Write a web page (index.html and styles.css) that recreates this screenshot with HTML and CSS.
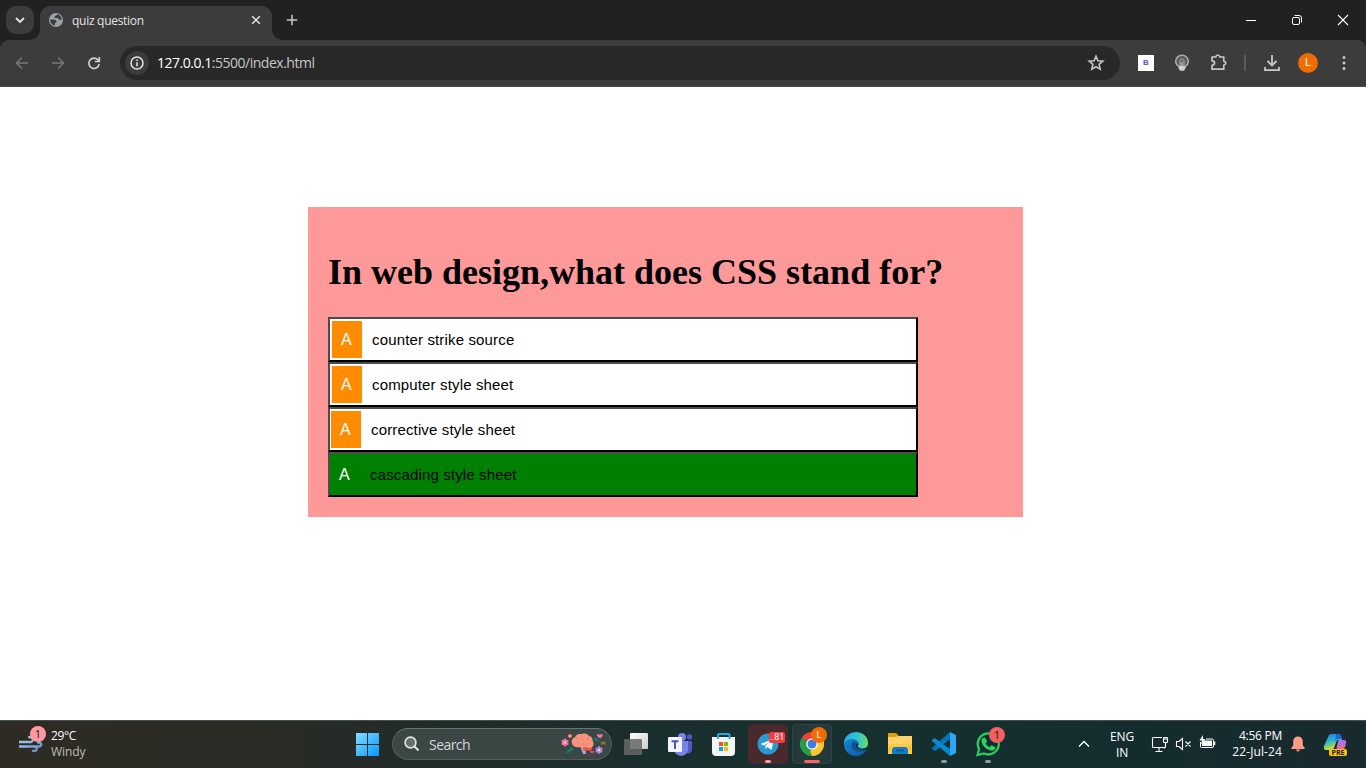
FILE: index.html
```html
<!DOCTYPE html>
<html lang="en">
<head>
<meta charset="utf-8">
<title>quiz question</title>
<link rel="stylesheet" href="styles.css">
</head>
<body>
<header class="tabstrip">
  <button class="tab-search"><svg width="12" height="12" viewBox="0 0 12 12"><path d="M2 4l4 4 4-4" fill="none" stroke="#e3e3e3" stroke-width="1.8"/></svg></button>
  <div class="tab">
    <svg width="16" height="16" viewBox="0 0 16 16"><circle cx="8" cy="8" r="7" fill="#9aa0a6"/><path d="M2.300 7.500h3.200c2 0 3 1 3 2.300 0 .8-.5 1-1.500 1.200l-.2 2.500C4 13 2 10.500 2.300 7.500zM9 2.300c0 1-.5 1.500-1.700 1.700-1.300.3-1 2 .2 2h2c1 0 1 1.600 2 1.800 1 .2 1.500-.3 2.200-.3C13.500 4.700 11.700 2.600 9 2.300z" fill="#3c3c3c"/></svg>
    <span class="tab-title">quiz question</span>
    <svg width="10" height="10" viewBox="0 0 10 10"><path d="M1.200 1.200l7.600 7.600M8.800 1.200L1.200 8.800" stroke="#e3e3e3" stroke-width="1.5"/></svg>
  </div>
  <svg class="new-tab" width="12" height="12" viewBox="0 0 12 12"><path d="M6 .7v10.600M.7 6h10.600" stroke="#c7c7c7" stroke-width="1.5"/></svg>
  <div class="window-buttons">
    <svg width="46" height="40" viewBox="0 0 46 40"><path d="M18 20.500h10" stroke="#fff"/></svg>
    <svg width="46" height="40" viewBox="0 0 46 40"><g fill="none" stroke="#fff"><rect x="18.500" y="17.500" width="7" height="7" rx="1.500"/><path d="M20.500 15.500h4.500a2.500 2.500 0 0 1 2.500 2.500v4.500"/></g></svg>
    <svg width="46" height="40" viewBox="0 0 46 40"><path d="M18 15l10 10M28 15L18 25" stroke="#fff" stroke-width="1.1"/></svg>
  </div>
</header>
<nav class="toolbar">
  <svg width="36" height="36" viewBox="0 0 36 36"><path d="M24 18H13M18 12.500L12.500 18l5.500 5.500" fill="none" stroke="#777" stroke-width="1.600"/></svg>
  <svg width="36" height="36" viewBox="0 0 36 36"><path d="M12 18h11M18 12.500l5.500 5.500-5.500 5.500" fill="none" stroke="#777" stroke-width="1.600"/></svg>
  <svg width="36" height="36" viewBox="0 0 36 36"><path d="M22.300 15.300A5.200 5.200 0 1 0 23.200 19M23.300 12v4.500h-4.500" fill="none" stroke="#d0d0d0" stroke-width="1.700"/></svg>
  <div class="omnibox">
    <span class="site-info"><svg width="14" height="14" viewBox="0 0 14 14"><circle cx="7" cy="7" r="6" fill="none" stroke="#e3e3e3" stroke-width="1.500"/><path d="M7 6.200v4M7 3.600v1.500" stroke="#e3e3e3" stroke-width="1.600"/></svg></span>
    <span class="url"><b>127.0.0.1</b>:5500/index.html</span>
    <svg class="star" width="18" height="18" viewBox="0 0 18 18"><path d="M9 2.300l1.900 4.500 4.900.4-3.700 3.200 1.100 4.800L9 12.700l-4.200 2.500 1.100-4.800-3.700-3.200 4.900-.4z" fill="none" stroke="#c7c7c7" stroke-width="1.600"/></svg>
  </div>
  <span class="tool"><span class="ext-b">B</span></span>
  <svg width="36" height="36" viewBox="0 0 36 36"><path d="M15 21.500c-2-1-3.300-2.800-3.300-5a6.300 6.300 0 0 1 12.600 0c0 2.200-1.300 4-3.300 5z" fill="#5c5c5c" stroke="#b4b4b4" stroke-width="1.300"/><path d="M16 22v-6c0-2.500 4-2.500 4 0v6" fill="none" stroke="#b8b8b8"/><path d="M14.500 21.500h7v2.500h-1v1.800h-5V24h-1z" fill="#cfcfcf"/><path d="M18 17v5" stroke="#ddd"/></svg>
  <svg width="36" height="36" viewBox="0 0 36 36"><path d="M12 12h3.700q.5-2 2.100-2t2.100 2h3.900v4.200q2 .3 2 1.900t-2 1.900v4.200H12v-3.900q2.600-.3 2.600-2.200T12 15.900z" fill="none" stroke="#c7c7c7" stroke-width="1.700" stroke-linejoin="round"/></svg>
  <span class="separator"></span>
  <svg width="36" height="36" viewBox="0 0 36 36"><path d="M18 10v10M13.500 16l4.500 4.500 4.500-4.500M11 22v3.100h14V22" fill="none" stroke="#c7c7c7" stroke-width="1.800"/></svg>
  <span class="tool"><span class="avatar">L</span></span>
  <svg width="36" height="36" viewBox="0 0 36 36" fill="#c7c7c7"><circle cx="18" cy="12.500" r="1.500"/><circle cx="18" cy="18" r="1.500"/><circle cx="18" cy="23.500" r="1.500"/></svg>
</nav>
<main class="page">
  <section class="quiz">
    <h1 class="question">In web design,what does CSS stand for?</h1>
    <button class="option"><span class="letter">A</span><span class="answer">counter strike source</span></button>
    <button class="option"><span class="letter">A</span><span class="answer">computer style sheet</span></button>
    <button class="option option-third"><span class="letter">A</span><span class="answer">corrective style sheet</span></button>
    <button class="option option-correct"><span class="letter">A</span><span class="answer">cascading style sheet</span></button>
  </section>
</main>
<footer class="taskbar">
  <div class="weather">
    <span class="weather-icon"><svg width="26" height="26" viewBox="0 0 26 26"><defs><linearGradient id="wind" x2="1" y2="1"><stop stop-color="#b3d0ee"/><stop offset="1" stop-color="#5c8fc4"/></linearGradient></defs><path d="M1 12h10.500a2.500 2.500 0 1 0-1-4M1 16.500h20.500a2 2 0 1 0-2-3M14 16.500h2.500a2.300 2.300 0 1 1-2 3.500" fill="none" stroke="url(#wind)" stroke-width="2.400"/></svg><span class="badge badge-pink">1</span></span>
    <div class="weather-text"><div class="temp">29°C</div><div class="cond">Windy</div></div>
  </div>
  <div class="apps">
    <svg class="app" width="44" height="48" viewBox="0 0 44 48"><defs><linearGradient id="win" x2="1" y2="1"><stop stop-color="#80dfff"/><stop offset="1" stop-color="#0795ff"/></linearGradient></defs><path d="M11 13h11v11H11zM23 13h11v11H23zM11 25h11v11H11zM23 25h11v11H23z" fill="url(#win)"/></svg>
    <div class="search">
      <svg width="16" height="16" viewBox="0 0 16 16"><circle cx="6.500" cy="6.500" r="5.400" fill="#647070" stroke="#e4e6e6" stroke-width="1.600"/><path d="M10.500 10.500l4 4" stroke="#e4e6e6" stroke-width="2"/></svg>
      <span class="search-label">Search</span>
      <svg class="brain" width="46" height="22" viewBox="0 0 46 22"><path d="M20 13l3 8h3l-1-8z" fill="#aaa1e0"/><path d="M22 14l8-1c3 0 3 4 0 4.500l-6 .2z" fill="#ee5536"/><path d="M12 10c-1-3 1-5 3-6 2-4 6-3 7-3 3-1 6 0 7 2 3 0 4 4 4 6 2 3-1 6-4 6-2 0-2-1-4-1-2 1-4 1-5 0-4 1-8-1-8-4z" fill="#f8957c"/><path d="M15 5c3-1 4 1 5 2M22 2c-2 3 2 3 1 6M29 4c-2 1-2 2-1 4M14 11c3-2 5-1 6 0s4 0 4-2M25 13c1-3 4-1 5-3" fill="none" stroke="#de7462" stroke-width=".6"/>
      <g fill="#ed6dad"><ellipse cx="5" cy="9.500" rx="1.800" ry="4"/><ellipse cx="5" cy="9.500" rx="1.800" ry="4" transform="rotate(60 5 9.500)"/><ellipse cx="5" cy="9.500" rx="1.800" ry="4" transform="rotate(120 5 9.500)"/></g><circle cx="5" cy="9.500" r="1.300" fill="#ffe16b"/>
      <g fill="#a788df"><ellipse cx="39" cy="17" rx="1.600" ry="4"/><ellipse cx="39" cy="17" rx="1.600" ry="4" transform="rotate(60 39 17)"/><ellipse cx="39" cy="17" rx="1.600" ry="4" transform="rotate(120 39 17)"/></g><circle cx="39" cy="17" r="1.200" fill="#ffe16b"/>
      <circle cx="10" cy="3" r="2" fill="#ef8158"/><circle cx="10" cy="3" r=".7" fill="#ffd778"/><path d="M40 5.500l-3-2.500c-1-2 1.500-3 2.500-1 1-2 4-1 3 1.300z" fill="#f86faa"/><path d="M32 20.500l-2-1.800c0-1.500 1.500-1.500 2-.5.700-1 2.500-.5 2 1z" fill="#f44889"/><path d="M6.500 19.500l7-4M8 16.500l2 3M10.500 14l1.500 4M34 5l5 3M35 8l2-3" stroke="#117f6b" stroke-width="1.600"/><path d="M41.500 8l4 4M45.500 8l-4 4M40.500 10h6" stroke="#a98131" stroke-width=".9"/></svg>
    </div>
    <svg class="app" width="44" height="48" viewBox="0 0 44 48"><defs><linearGradient id="view" x2="1" y2="1"><stop stop-color="#fff"/><stop offset="1" stop-color="#ccc"/></linearGradient></defs><rect x="16" y="13" width="18" height="16" rx="1" fill="url(#view)"/><rect x="10" y="19" width="18" height="16" rx="1" fill="#666" fill-opacity=".85"/></svg>
    <svg class="app" width="44" height="48" viewBox="0 0 44 48"><circle cx="24" cy="17" r="4" fill="#7b83eb"/><circle cx="31.500" cy="17" r="2.700" fill="#5059c9"/><path d="M26 21h8v8c0 5-6 6-8 2z" fill="#5059c9"/><path d="M16 21h14v8c0 9-14 9-14 0z" fill="#7b83eb"/><rect x="10" y="17" width="14" height="15" rx="1" fill="#f4f4ff"/><path d="M13.500 21.200h7M17 21v8" stroke="#4b53bc" stroke-width="2"/></svg>
    <svg class="app" width="44" height="48" viewBox="0 0 44 48"><path d="M10 17h23v15q0 4-4 4H14q-4 0-4-4z" fill="#f4f4f4"/><path d="M16 19v-4q0-1 1-1h9.500q1 0 1 1v4" fill="none" stroke="#19ace4" stroke-width="2"/><path d="M17 22h4v4h-4z" fill="#f25022"/><path d="M22 22h4v4h-4z" fill="#7fba00"/><path d="M17 27h4v4h-4z" fill="#00a4ef"/><path d="M22 27h4v4h-4z" fill="#ffb900"/></svg>
    <div class="app tile tile-red"><svg width="22" height="22" viewBox="0 0 22 22"><circle cx="11" cy="11" r="10.500" fill="#289bd3"/><path d="M3.500 11L17 5.500 14.500 17l-4-3-2 2v-3.500L14 8l-7 4.500z" fill="#fff"/></svg><span class="count">..81</span><i class="indicator pink"></i></div>
    <div class="app tile tile-active"><svg width="24" height="24" viewBox="0 0 24 24"><path d="M12 12L1.600 6A12 12 0 0 1 22.400 6z" fill="#ea4335"/><path d="M12 12l10.400-6A12 12 0 0 1 12 24z" fill="#fbc52c"/><path d="M12 12v12A12 12 0 0 1 1.600 6z" fill="#269c4b"/><path d="M16.800 14.700L12 24l-2-5z" fill="#fbc52c"/><path d="M12 6.600h10.700L22.400 6H9z" fill="#ea4335"/><circle cx="12" cy="12" r="5.800" fill="#fff"/><circle cx="12" cy="12" r="4.500" fill="#3e7de9"/></svg><span class="profile">L</span><i class="indicator wide"></i></div>
    <svg class="app" width="44" height="48" viewBox="0 0 44 48"><defs><linearGradient id="edgea"><stop stop-color="#29a5e6"/><stop offset=".6" stop-color="#32c7ca"/><stop offset="1" stop-color="#6fda54"/></linearGradient><linearGradient id="edgeb" x2="1" y2="1"><stop stop-color="#168ed6"/><stop offset="1" stop-color="#0b55a3"/></linearGradient></defs><circle cx="22" cy="24" r="12" fill="url(#edgeb)"/><path d="M10 24C10 8 34 9 34 23c0 6-7 7-10 4-1-1 1-2 .500-4-1-5-11-6-14.500 1z" fill="url(#edgea)"/><path d="M19 22c-5 7 4 13 13 8l1-1c1-1 0-1-1-1-5 2-10 0-10-4 0-3-2-3-3-2z" fill="#154e91"/><path d="M24 23c1 2-1 3 0 4 3 3 7 2 9 0l1 1-2 2c-6 1-10-2-10-6z" fill="#152d31"/></svg>
    <svg class="app" width="44" height="48" viewBox="0 0 44 48"><path d="M10 14q0-1 1-1h7l3 3h12q1 0 1 1v17H10z" fill="#dfa00d"/><path d="M10 17h8l2-1h14v17q0 1-1 1H10z" fill="#ffd166"/><path d="M10 24h24v10H10z" fill="#fec83d"/><path d="M14 34v-4q0-3 3-3h10q3 0 3 3v4z" fill="#127bc8"/><path d="M18 30.500h8" stroke="#075795" stroke-width="1.500"/></svg>
    <div class="app"><svg width="44" height="48" viewBox="0 0 44 48"><path d="M10 28l18-16v7L14 30.500l-1.500.5-2.500-2z" fill="#0873bd"/><path d="M10 20l2.500-2L28 29v7L10 21z" fill="#0988d4"/><path d="M28 12l6 3v18l-6 3z" fill="#2ca7f3"/></svg><i class="indicator gray"></i></div>
    <div class="app"><svg width="44" height="48" viewBox="0 0 44 48"><path d="M11.500 35l1.600-6A10.500 10.500 0 1 1 18 33.500z" fill="#152d31" stroke="#27cf5a" stroke-width="2.300"/><path d="M17 18l2-.5 2 4-1.500 2c1 2 2.500 3 4 3.700l2-2 4 2c0 3-3 4-5.500 3-5-1.700-8-5-8.500-9-.1-1.500.5-2.500 1.500-3.200z" fill="#2ad65e"/></svg><span class="badge badge-wa">1</span><i class="indicator gray"></i></div>
  </div>
  <div class="tray">
    <svg class="chevron" width="12" height="8" viewBox="0 0 12 8"><path d="M1 6.500l5-5 5 5" fill="none" stroke="#fff" stroke-width="1.400"/></svg>
    <div class="lang">ENG<br>IN</div>
    <svg width="18" height="18" viewBox="0 0 18 18"><g fill="none" stroke="#fff" stroke-width="1.100"><path d="M11 2.500H2.500q-1 0-1 1v8q0 1 1 1h11q1 0 1-1V9M8 13v3M4.500 16.500h7M14.500 7v4q0 2-2 2"/><rect x="12.500" y="2.500" width="4" height="5" rx=".7"/><path d="M13 4h3"/></g></svg>
    <svg class="volume" width="17" height="14" viewBox="0 0 17 14"><path d="M1.500 4.500H4l3.500-3v11L4 9.500H1.500zM10.500 4.500l5 5M15.500 4.500l-5 5" fill="none" stroke="#fff" stroke-width="1.100"/></svg>
    <svg class="battery" width="17" height="15" viewBox="0 0 17 15"><path d="M1.500 7v4.500q0 1 1 1H13q1.500 0 1.500-1.500V5.500Q14.500 4 13 4H7" fill="none" stroke="#fff"/><path d="M5 5.500h8V11H3V8.500zM15 6.500h1.300v3.500H15zM4 0L.5 5.500H3L2 9.500 6.500 4H4z" fill="#fff"/></svg>
    <div class="clock"><span>4:56 PM</span><span class="date">22-Jul-24</span></div>
    <svg class="bell" width="14" height="16" viewBox="0 0 14 16"><path d="M7 .5c3 0 4.800 2 4.800 5v4L13.700 12v1H.3v-1l1.900-2.500v-4c0-3 1.800-5 4.800-5zM5 13.500h4Q8.500 15.500 7 15.500T5 13.500" fill="#ff9c88"/></svg>
    <div class="copilot"><svg width="24" height="24" viewBox="0 0 24 24"><defs><linearGradient id="cpa" x2=".3" y2="1"><stop stop-color="#197cf1"/><stop offset=".5" stop-color="#2bb7c9"/><stop offset="1" stop-color="#d6dc32"/></linearGradient><linearGradient id="cpb" x2="0" y2="1"><stop stop-color="#9b73f3"/><stop offset=".6" stop-color="#ef6599"/><stop offset="1" stop-color="#ff9f54"/></linearGradient></defs><path d="M6 2q1-1 3-1h6q2 0 3 3l1 3h-5l-3 8q-1 2-3 2H3q-3 0-2-4z" fill="url(#cpa)"/><path d="M15 8l1-1h5q3 0 2 4l-3 8q-1 3-3 3H9l4-4z" fill="url(#cpb)"/><path d="M13 1h3q2 0 3 5h-5q-1 0-2 3z" fill="#1769dc"/></svg><span class="pre">PRE</span></div>
  </div>
</footer>
</body>
</html>
```
FILE: styles.css
```css
* { box-sizing: border-box; }
body {
  margin: 0; width: 1366px; height: 768px; overflow: hidden;
  display: flex; flex-direction: column;
  background: #fff; font-family: "Open Sans", "Noto Sans", sans-serif;
}
svg { display: block; flex: none; }
button { border: 0; padding: 0; }

.tabstrip { height: 40px; flex: none; display: flex; background: #202221; }
.tab-search {
  width: 28px; height: 28px; margin: 6px 6px 0; border-radius: 10px;
  display: flex; align-items: center; justify-content: center; background: #3c3c3c;
}
.tab {
  width: 232px; height: 34px; margin-top: 6px; padding: 0 11px 6px 8px;
  display: flex; align-items: center; position: relative;
  background: #3c3c3c; border-radius: 10px 10px 0 0;
}
.tab::before, .tab::after {
  content: ""; position: absolute; bottom: 0; width: 10px; height: 10px;
}
.tab::before { left: -10px; background: radial-gradient(circle at 0 0, transparent 9.5px, #3c3c3c 10px); }
.tab::after { right: -10px; background: radial-gradient(circle at 100% 0, transparent 9.5px, #3c3c3c 10px); }
.tab-title { margin-left: 8px; flex: 1; color: #e3e3e3; font-size: 12px; letter-spacing: -.28px; }
.new-tab { margin: 14px 0 0 14px; }
.window-buttons { margin-left: auto; display: flex; }

.toolbar {
  height: 47px; flex: none; display: flex; align-items: flex-start;
  padding: 5px 4px 0; border-bottom: 1px solid #4a4a4a;
  background:
    radial-gradient(circle at 0 100%, #3c3c3c 7.5px, #202221 8px) 100% 0 / 8px 8px no-repeat,
    radial-gradient(circle at 100% 100%, #3c3c3c 7.5px, #202221 8px) 0 0 / 8px 8px no-repeat,
    #3c3c3c;
}
.omnibox {
  width: 1000px; height: 34px; margin: 1px 8px 0; padding: 0 15px 0 5px;
  display: flex; align-items: center; background: #282828; border-radius: 17px;
}
.site-info {
  width: 24px; height: 24px; border-radius: 50%; background: #3c3c3c;
  display: flex; align-items: center; justify-content: center;
}
.url { margin-left: 8px; font-size: 14px; line-height: 18px; margin-top: -1px; letter-spacing: -.48px; color: #c7c7c7; }
.url b { font-weight: 400; color: #fff; }
.star { margin-left: auto; }
.tool { width: 36px; height: 36px; display: flex; align-items: center; justify-content: center; }
.ext-b {
  width: 16px; height: 16px; background: #fff; color: #6354c5;
  font: 700 8px/16px "Liberation Sans", sans-serif; text-align: center;
}
.separator { width: 2px; height: 16px; margin: 10px 8px; background: #5c5c5c; }
.avatar {
  width: 20px; height: 20px; border-radius: 50%; background: #ef6c00; color: #fff;
  font: 11px/20px Roboto, sans-serif; text-align: center;
}

.page { height: 633px; flex: none; padding: 120px 0 0 308px; background: #fff; }
.quiz { width: 715px; height: 310px; padding: 42px 20px 20px; background: #fd9999; }
.question {
  margin: 0 0 27px; height: 41px; line-height: 46px; white-space: nowrap;
  font-family: "Liberation Serif", serif; font-size: 36px; font-weight: 700;
}
.option {
  width: 590px; height: 45px; padding: 2px;
  display: flex; align-items: flex-start;
  background: #fff; border: 2px solid;
  border-color: #4c4c4c #000 #000 #4c4c4c;
  color: #000; font: 15px/17px "Liberation Sans", Arial, sans-serif; letter-spacing: .15px;
}
.letter { width: 30px; height: 37px; line-height: 37px; padding-right: 1px; text-align: center; font-size: 16px; background: #ff8c00; color: #fff; }
.answer { margin-left: 10px; line-height: 37px; }
.option-third { padding-left: 1px; }
.option-correct { padding-left: 0; background: #008000; }
.option-correct .letter { background: #008000; }

.taskbar {
  height: 48px; flex: none; display: flex; position: relative; border-top: 1px solid #42504f;
  background: linear-gradient(90deg, #2e2b24 0, #292b25 20%, #222b29 30%, #17302f 55%, #142d2f 80%, #192a2f 100%);
  color: #fff;
}
.weather { width: 345px; display: flex; padding: 6px 0 0 18px; }
.weather-icon { width: 26px; height: 30px; position: relative; }
.weather-icon svg { margin-top: 3px; }
.badge {
  position: absolute; width: 16px; height: 16px; border-radius: 50%; color: #161b1c;
  font-size: 11px; line-height: 16px; text-align: center;
}
.badge-pink { left: 12px; top: -1px; background: #fe98a1; }
.badge-wa { left: 23px; top: 7px; background: #f45f5f; }
.weather-text { margin-left: 7px; font-size: 12px; line-height: 16px; padding-top: 1px; }
.temp { letter-spacing: -.4px; }
.cond { color: #bdbdb9; letter-spacing: -.1px; }
.apps { display: flex; margin-top: -1px; }
.search {
  width: 220px; height: 32px; margin: 8px 2px 0 3px; padding: 0 5px 0 11px;
  border: 1px solid #515d5b; border-top-color: #697472; border-radius: 16px;
  display: flex; align-items: center; background: #3b4745;
}
.search-label { margin-left: 9px; font-size: 14px; letter-spacing: -.55px; color: #d4d8d7; }
.brain { margin-left: auto; }
.app { width: 44px; height: 48px; flex: none; position: relative; }
.tile::before { content: ""; position: absolute; left: 2px; right: 2px; top: 4px; bottom: 4px; border-radius: 4px; }
.tile-red::before { background: #4a292c; }
.tile-active::before { background: #25393b; border: 1px solid #304446; }
.tile { padding: 13px 0 0 11px; }
.tile-active { padding: 12px 0 0 10px; }
.tile svg { position: relative; }
.count {
  position: absolute; left: 23px; top: 12px; width: 16px; height: 11px; border-radius: 2px;
  background: #f23c3d; font: 9px/11px Roboto, sans-serif; text-align: center;
}
.profile {
  position: absolute; left: 21px; top: 7px; width: 16px; height: 16px; border-radius: 50%;
  background: #ef6c00; font: 9px/16px Roboto, sans-serif; text-align: center;
}
.indicator { position: absolute; left: 19px; bottom: 5px; width: 6px; height: 3px; border-radius: 2px; }
.pink { background: #ff9aa5; }
.wide { left: 14px; width: 16px; background: #fa6464; }
.gray { background: #929b9b; }
.tray { margin-left: auto; display: flex; align-items: flex-start; padding-top: 14px; }
.chevron { margin: 5px 19px 0 0; }
.lang { width: 26px; margin: -6px 16px 0 0; text-align: center; font-size: 12px; line-height: 16px; letter-spacing: -.2px; }
.volume { margin: 2px 0 0 6px; }
.battery { margin: 0 0 0 7px; }
.clock {
  width: 54px; margin: -7px 9px 0 12px; display: flex; flex-direction: column; align-items: flex-end;
  font-size: 12px; line-height: 16px; letter-spacing: -.25px; white-space: nowrap;
}
.date { letter-spacing: .1px; }
.bell { margin-top: 1px; }
.copilot { position: relative; margin: -2px 19px 0 18px; }
.pre {
  position: absolute; left: 6px; top: 16px; width: 18px; height: 7px; border-radius: 2px;
  background: #fbc400; color: #252015; font: 700 7px/8px "Open Sans", sans-serif; text-align: center;
}
```
